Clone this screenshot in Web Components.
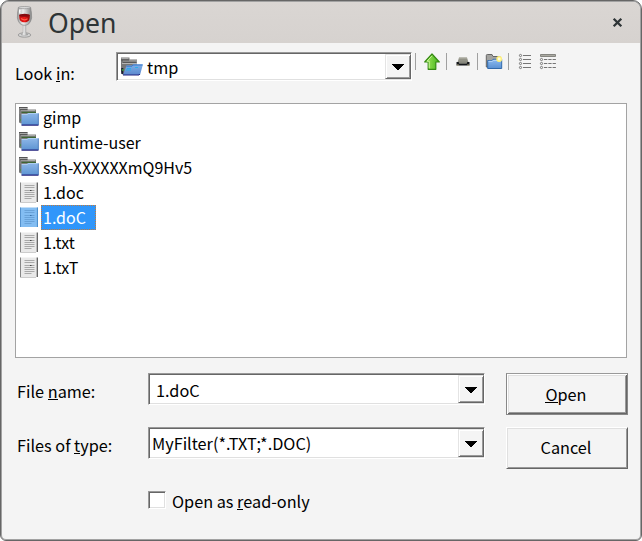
<!DOCTYPE html>
<html lang="en">
<head>
<meta charset="utf-8">
<title>Open</title>
<style>
html,body{margin:0;width:642px;height:541px;overflow:hidden;background:#fff}
body{font:16.250px/25px "Noto Sans CJK SC","Noto Sans",sans-serif;color:#000}
</style>
</head>
<body>
<open-dialog></open-dialog>
<script>
const define = (name, html) => {
  const t = document.createElement('template');
  t.innerHTML = html;
  customElements.define(name, class extends HTMLElement {
    constructor() {
      super();
      this.attachShadow({mode: 'open'}).append(t.content.cloneNode(true));
    }
  });
};

const ART = {
  wine: [20, 34, `<defs><linearGradient id="g"><stop offset="0" stop-color="#999"/><stop offset=".4" stop-color="#eee"/><stop offset="1" stop-color="#858585"/></linearGradient><linearGradient id="r"><stop offset="0" stop-color="#c01010"/><stop offset=".5" stop-color="#ee1818"/><stop offset="1" stop-color="#930505"/></linearGradient></defs>
    <ellipse cx="10.500" cy="30" rx="6.300" ry="2.200" fill="#d5d5d5" stroke="#8f8f8f" stroke-width=".8"/>
    <path d="M9.200 19h2.600l.2 8.500 2 2.300q-3.500 1.500-7 0l2-2.300z" fill="url(#g)" stroke="#999" stroke-width=".4"/>
    <path d="M4.400 2.400h12.200q1.200 6 1 10.500q-1.300 7.400-7.100 7.400T3.400 12.900q-.2-4.500 1-10.500z" fill="url(#g)" stroke="#888" stroke-width=".7"/>
    <path d="M5.300 10h10.400q.5 5-2 6.500-3.200 1.700-6.400 0Q4.800 15 5.300 10z" fill="url(#r)"/>
    <ellipse cx="10.500" cy="10.200" rx="5.200" ry="1.500" fill="#850b10"/>
    <path d="M7 13.500q3 2.500 6.500.2" stroke="#ff5b48" stroke-width="1.200" fill="none"/>
    <ellipse cx="10.500" cy="2.600" rx="6.100" ry="1.100" fill="#d9d9d9" stroke="#888" stroke-width=".6"/>
    <path d="M6 4.500q-.7 2 0 4" stroke="#fff" stroke-width="1.500" fill="none"/>`],
  folder: [21, 20, `<defs><linearGradient id="b" x2="0" y2="1"><stop offset="0" stop-color="#8fb8e8"/><stop offset="1" stop-color="#5d94d2"/></linearGradient></defs>
    <path d="M0 0h8.500v2.500h8.500v14H2L0 15.500z" fill="#808080"/><path d="M1 1.500h7M2 3.500h14" stroke="#aaa"/><path d="M0 .4h8.500M1 2.700h7.500" stroke="#444" stroke-width=".8"/><path d="M1 7v8" stroke="#707376" stroke-width="1.500"/><path d="M2.500 5.300h14.500" stroke="#2d6020"/>
    <path d="M1 13h1" stroke="#2aa02a"/>
    <path d="M2.500 18V7.800q0-.9.800-.9H8l1.200-1h9.800q.7 0 .7.700v11.400z" fill="url(#b)"/><path d="M2.700 7.500h5.500l1.200-1h9.800" stroke="#b6d3f4" fill="none" stroke-width=".8"/><path d="M2.500 18.200h17" stroke="#20207c" fill="none" stroke-width="1.200"/><path d="M19.300 6.500v11.500" stroke="#4976b8" stroke-width=".8"/>`],
  opened: [24, 21, `<defs><linearGradient id="b" x2="0" y2="1"><stop offset="0" stop-color="#7fb1e8"/><stop offset="1" stop-color="#5b87cd"/></linearGradient></defs>
    <path d="M1 1.500h8.500v2H17V19H3L1 16z" fill="#777"/><path d="M1.500 2.300h7M3 5h14M2 7.500h15" stroke="#b4b4b4"/><path d="M1 4h8M3 6.300h13" stroke="#484848" stroke-width=".8"/><path d="M2.300 12v6" stroke="#1a1d35" stroke-width="2"/><path d="M2 14h1.500" stroke="#35b833" stroke-width="1.500"/>
    <path d="M3 19L6.500 9.500H12l1-1.200h10L20 19z" fill="url(#b)"/><path d="M6.300 10.200H12l1-1.200h9.500" stroke="#3b77ca" fill="none"/><path d="M7 12.500h4M15 11.500h3M6 14h5" stroke="#26aeea" stroke-width=".9"/><path d="M3 19h16l.8-1" stroke="#20207c" fill="none"/>`],
  doc: [19, 21, `<path d="M1 .5h17v19.500H1z" fill="#e9e9e9"/><path d="M1.500.5V20" stroke="#858585" stroke-width="1"/><path d="M18.300.5V20" stroke="#555" stroke-width="1.200"/><path d="M1 20.500h16" stroke="#ccc"/>
    <path d="M5.500 3.500h10M5.500 5.500h10M5.500 8.500h10M5.500 10.500h10M5.500 12.500h10M5.500 14.500h10M5.500 16.500h7" stroke="#a2a2a2" stroke-width=".9"/><path d="M11 8.500h1.500" stroke="#444"/>`],
  docsel: [19, 21, `<path d="M1.200.5h17.800v19.500H1.200z" fill="#83bdf2"/><path d="M1.500.5V20" stroke="#5592cd"/><path d="M18.400.5V20" stroke="#468ac9"/>
    <path d="M5.500 3.500h10M5.500 5.500h10M5.500 8.500h10M5.500 10.500h10M5.500 12.500h10M5.500 14.500h10M5.500 16.500h7" stroke="#669fd5" stroke-width=".9"/><path d="M11 8.500h1.500" stroke="#3971a8"/>`],
  up: [18, 18, `<defs><linearGradient id="b"><stop offset="0" stop-color="#a9ea60"/><stop offset="1" stop-color="#43b51c"/></linearGradient></defs><path d="M9 1l7.300 8h-3.500v7.300H5.200V9H1.700z" fill="url(#b)" stroke="#348a12" stroke-width="1.200" stroke-linejoin="round"/><path d="M9 2.800L4 8.200h2.200v7" fill="none" stroke="#c9f59a"/>`],
  desktop: [16, 18, `<path d="M4 4.500h8l1.500 5h-11z" fill="#929287"/><path d="M4 5h8" stroke="#b5b5ab"/><path d="M1.500 9h13v3.500h-13z" fill="#15171b"/><path d="M3.500 8.500h9l-.8 2.300H4.300z" fill="#85867c"/><path d="M1.800 12h2M12.200 12h2" stroke="#b8b28c"/>`],
  newdir: [18, 18, `<defs><linearGradient id="b" x2="0" y2="1"><stop offset="0" stop-color="#8ebcf0"/><stop offset="1" stop-color="#5990d3"/></linearGradient></defs><path d="M1.300 14V2.500q0-1 1-1H7l1 2h7V14z" fill="#a3a3a0" stroke="#666"/><path d="M2.700 15.500V7.500H7l1-1.200h8.700v9.200z" fill="url(#b)" stroke="#3169aa"/><path d="M3.500 8.300h4l1-1h7.500" stroke="#b9d8fa" fill="none"/><circle cx="14.200" cy="6" r="2.900" fill="#fff17a"/><circle cx="14.200" cy="6" r="1.400" fill="#fffde4"/>`],
  list: [14, 18, `<g fill="none" stroke="#757575"><circle cx="2.500" cy="2.500" r="1.100"/><circle cx="2.500" cy="6.500" r="1.100"/><circle cx="2.500" cy="10.500" r="1.100"/><circle cx="2.500" cy="14.500" r="1.100"/><path d="M5 2.500h8M5 6.500h8M5 10.500h8M5 14.500h8"/></g>`],
  details: [18, 18, `<path d="M1.500 1.500h15v2h-15z" fill="#aaa9a1" stroke="#858580"/><g fill="none" stroke="#757575"><circle cx="2.500" cy="6.500" r="1.100"/><circle cx="2.500" cy="10.500" r="1.100"/><circle cx="2.500" cy="14.500" r="1.100"/><path d="M5 6.500h12M5 10.500h12M5 14.500h12" stroke-dasharray="3.300 1"/></g>`],
  close: [11, 11, `<path d="M1.700 1.700l7.600 7.600M9.300 1.700l-7.600 7.600" stroke="#2e3436" stroke-width="2.300"/>`],
  drop: [12, 7, `<path d="M0 0h12v1h-1v1h-1v1H9v1H8v1H7v1H5V5H4V4H3V3H2V2H1V1H0z" fill="#000"/>`]
};
customElements.define('ui-icon', class extends HTMLElement {
  connectedCallback() {
    const [w, h, art] = ART[this.getAttribute('name')];
    this.attachShadow({mode: 'open'}).innerHTML =
      `<style>:host{display:block;flex:none;width:${w}px;height:${h}px}svg{display:block}</style><svg width="${w}" height="${h}" viewBox="0 0 ${w} ${h}">${art}</svg>`;
  }
});

define('title-bar', `<style>:host{display:flex;align-items:center;height:41px;padding:0 17px 0 12px;background:linear-gradient(#dad6d3,#d6d2cf);box-sizing:border-box}
  h1{flex:1;margin:0 0 0 14px;font:26.600px/40px "Noto Sans",sans-serif;color:#2e3436}ui-icon[name=wine]{margin-top:-2px}ui-icon[name=close]{margin-top:-1px}</style>
  <ui-icon name="wine"></ui-icon><h1><slot></slot></h1><ui-icon name="close"></ui-icon>`);

define('combo-box', `<style>:host{display:flex;box-sizing:border-box;background:#fff;border:1px solid;border-color:#999 #fff #fff #999;box-shadow:inset 1px 1px #666,inset -1px -1px #e0e0e0;padding:1px 0 1px 2px}
  .v{flex:1;display:flex;align-items:center;min-width:0;min-height:0;white-space:nowrap;padding-left:var(--inset,2px);padding-top:var(--drop,0)}
  .b{width:26px;background:#f4f4f4;display:flex;align-items:center;justify-content:center;box-sizing:border-box;border:1px solid;border-color:#e4e4e4 #666 #666 #e4e4e4;box-shadow:inset 1px 1px #fff,inset -1px -1px #999}
  .b ui-icon{margin:2px 1px 0 0}</style><div class="v"><slot></slot></div><div class="b"><ui-icon name="drop"></ui-icon></div>`);

define('push-button', `<style>:host{display:flex;align-items:center;justify-content:center;box-sizing:border-box;height:42px;width:122px;background:#f4f4f4;border:1px solid;border-color:#fff #666 #666 #fff;box-shadow:inset 1px 1px #e0e0e0,inset -1px -1px #999}
  :host([primary]){border-color:#999 #888 #888 #888;box-shadow:inset 1px 1px #fff,inset -1px -1px #666,inset 2px 2px #e0e0e0,inset -2px -2px #999}:host([primary]) span{margin-top:1px}span{margin:-1px 2px 0 0}</style><span><slot></slot></span>`);

define('check-box', `<style>:host{display:flex;align-items:center}i{width:18px;height:18px;box-sizing:border-box;background:#fff;border:1px solid;border-color:#999 #fff #fff #999;box-shadow:inset 1px 1px #666,inset -1px -1px #e0e0e0;margin:-3px 6px 0 0}</style><i></i><span><slot></slot></span>`);

define('tool-bar', `<style>:host{display:grid;grid-template-columns:31px 31px 31px 28px 23px;height:18px}
  div{display:flex;justify-content:center;box-sizing:border-box}.s{border-left:1px solid #a0a0a0;height:17px;padding-left:1px}.l{padding-left:4px}</style>
  <div class="s"><ui-icon name="up"></ui-icon></div><div class="s"><ui-icon name="desktop"></ui-icon></div><div class="s"><ui-icon name="newdir"></ui-icon></div><div class="s l"><ui-icon name="list"></ui-icon></div><div><ui-icon name="details"></ui-icon></div>`);

customElements.define('file-row', class extends HTMLElement {
  connectedCallback() {
    this.attachShadow({mode: 'open'}).innerHTML = `<style>:host{display:flex;height:25px;align-items:flex-start}
    .i{width:22px;margin:2px 0 0 3px}span{box-sizing:border-box;height:25px;padding:0 10px 0 2px;white-space:nowrap}:host([selected]) span{background:#3096fa;color:#fff;outline:1px dotted #c37b3b;outline-offset:-1px}
    </style><div class="i"><ui-icon name="${this.getAttribute('icon')}"></ui-icon></div><span><slot></slot></span>`;
  }
});

define('file-list', `<style>:host{display:block;box-sizing:border-box;border:1px solid #a3a3a3;background:#fff;padding-top:1px;font-size:16px}</style><slot></slot>`);

define('open-dialog', `<style>
  :host{display:flex;flex-direction:column;box-sizing:border-box;width:642px;height:541px;border:1px solid #666;padding:1px;border-radius:9px 9px 6px 6px;background:#f4f4f4;overflow:hidden;box-shadow:inset 0 0 0 1px #a2a2a2}
  u{text-decoration:none;background:linear-gradient(#000,#000) 0 calc(100% - var(--u,3px))/100% 1px no-repeat}
  title-bar{border-radius:7px 7px 0 0}
  .look{display:grid;grid-template-columns:101px 296px 1fr;grid-template-rows:29px;margin:9px 0 0 13px;height:29px}
  .look label{padding-top:9px}
  tool-bar{margin:1px 0 0 3px}
  file-list{margin:22px 13px 0;height:255px}
  .form{display:grid;grid-template-columns:131px 337px 122px;grid-template-rows:42px 42px;row-gap:12px;column-gap:0;margin:15px 12px 0 15px}
  .form combo-box{height:32px;width:337px}.form label{padding-top:6px}push-button{margin-left:21px}
  check-box{margin:20px 0 0 146px}
  .n{margin:2px 0 0 3px}
  </style>
  <title-bar>Open</title-bar>
  <div class="look"><label>Look <u>i</u>n:</label><combo-box style="--inset:1px"><ui-icon name="opened"></ui-icon><span class="n">tmp</span></combo-box><tool-bar></tool-bar></div>
  <file-list>
    <file-row icon="folder">gimp</file-row><file-row icon="folder">runtime-user</file-row><file-row icon="folder">ssh-XXXXXXmQ9Hv5</file-row>
    <file-row icon="doc">1.doc</file-row><file-row icon="docsel" selected>1.doC</file-row><file-row icon="doc">1.txt</file-row><file-row icon="doc">1.txT</file-row>
  </file-list>
  <div class="form">
    <label>File <u>n</u>ame:</label><combo-box style="--inset:5px;--drop:3px">1.doC</combo-box><push-button primary><u>O</u>pen</push-button>
    <label>Files of <u>t</u>ype:</label><combo-box style="--inset:1px;--drop:1px">MyFilter(*.TXT;*.DOC)</combo-box><push-button>Cancel</push-button>
  </div>
  <check-box>Open as <u>r</u>ead-only</check-box>`);
</script>
</body>
</html>
